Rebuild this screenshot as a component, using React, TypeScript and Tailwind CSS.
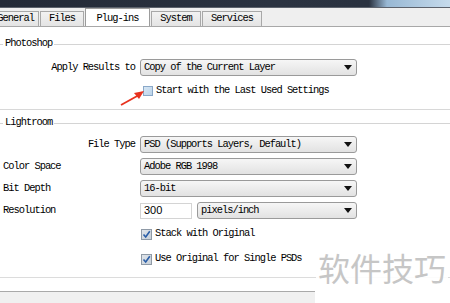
import React from 'react';

const mono = "font-['Liberation_Mono',monospace] text-[10.4px] tracking-[-1px] text-black";

function Arrow() {
  return (
    <svg width="8" height="5" viewBox="0 0 8 5" className="shrink-0">
      <polygon points="0,0 8,0 4,5" fill="#111" />
    </svg>
  );
}

function Select({ value, width = 'w-[217px]' }: { value: string; width?: string }) {
  return (
    <div
      className={`${width} h-[17px] flex items-center justify-between pl-[3px] pr-[4px] border border-[#9a9a9a] rounded-[3px] bg-[linear-gradient(180deg,#f6f6f6_0%,#ececec_50%,#e2e2e2_100%)]`}
    >
      <span className="whitespace-pre">{value}</span>
      <Arrow />
    </div>
  );
}

function Check({ checked }: { checked: boolean }) {
  if (!checked) {
    return (
      <div className="w-[10px] h-[10px] border border-[#8aa8c8] bg-[linear-gradient(135deg,#d6e6f4_0%,#bcd4ea_100%)]" />
    );
  }
  return (
    <div className="w-[11px] h-[11px] border border-[#8f9aa6] bg-[linear-gradient(135deg,#dfe4ea_0%,#c8d0d8_100%)] flex items-center justify-center">
      <svg width="9" height="9" viewBox="0 0 9 9">
        <path d="M1.5 4.5 L3.7 7 L7.8 1.2" stroke="#2a5ea8" strokeWidth="1.6" fill="none" />
      </svg>
    </div>
  );
}

function GroupHeader({ label }: { label: string }) {
  return (
    <div className="h-[12px] flex items-center">
      <div className="w-[3px] h-px bg-[#d4d4d4]" />
      <span className="px-[2px] whitespace-pre">{label}</span>
      <div className="flex-1 h-px bg-[#d4d4d4]" />
    </div>
  );
}

function Tab({ label, active, w }: { label: string; active?: boolean; w: string }) {
  if (active) {
    return (
      <div className={`${w} h-[18px] bg-white border border-b-0 border-[#9c9c9c] flex items-start justify-center pt-[2px]`}>
        {label}
      </div>
    );
  }
  return (
    <div className={`${w} h-[15px] bg-[linear-gradient(180deg,#f2f2f2,#e4e4e4)] border border-b-0 border-[#a8a8a8] flex items-center justify-center`}>
      {label}
    </div>
  );
}

export default function App() {
  return (
    <div className={`relative w-[450px] h-[303px] overflow-hidden bg-white ${mono}`}>
      {/* title bar */}
      <div className="h-[8px] bg-[linear-gradient(90deg,#232a37_0%,#2b3341_60%,#2a3240_82%,#98b8d4_86%,#c6dbec_100%)] border-b border-[#5c626c]" />

      {/* tabs */}
      <div className="h-[19px] flex items-end bg-[#efefef] border-b border-[#a8a8a8]">
        <div className="flex items-end -ml-[6px] gap-[1px]">
          <Tab label="General" w="w-[45px] justify-end pr-[4px]" />
          <Tab label="Files" w="w-[44px]" />
          <Tab label="Plug-ins" active w="w-[65px]" />
          <Tab label="System" w="w-[50px]" />
          <Tab label="Services" w="w-[60px]" />
        </div>
      </div>

      {/* Photoshop group */}
      <div className="mt-[11px]">
        <GroupHeader label="Photoshop" />
      </div>
      <div className="mt-[9px] flex items-center">
        <div className="w-[135px] text-right whitespace-pre">Apply Results to</div>
        <div className="ml-[5px]">
          <Select value="Copy of the Current Layer" />
        </div>
      </div>
      <div className="mt-[9px] h-[12px] flex items-center pl-[143px] gap-[3px]">
        <Check checked={false} />
        <span className="whitespace-pre">Start with the Last Used Settings</span>
      </div>
      <div className="mt-[12px] h-px bg-[#d8d8d8]" />

      {/* Lightroom group */}
      <div className="mt-[7px]">
        <GroupHeader label="Lightroom" />
      </div>
      <div className="mt-[7px] flex items-center">
        <div className="w-[135px] text-right whitespace-pre">File Type</div>
        <div className="ml-[5px]">
          <Select value="PSD (Supports Layers, Default)" />
        </div>
      </div>
      <div className="mt-[5px] flex items-center">
        <div className="w-[135px] pl-[3px] whitespace-pre">Color Space</div>
        <div className="ml-[5px]">
          <Select value="Adobe RGB 1998" />
        </div>
      </div>
      <div className="mt-[5px] flex items-center">
        <div className="w-[135px] pl-[3px] whitespace-pre">Bit Depth</div>
        <div className="ml-[5px]">
          <Select value="16-bit" />
        </div>
      </div>
      <div className="mt-[5px] flex items-center">
        <div className="w-[135px] pl-[3px] whitespace-pre">Resolution</div>
        <div className="ml-[5px] flex items-center gap-[5px]">
          <div className="w-[52px] h-[16px] border border-[#d4d4d4] bg-white flex items-center pl-[3px] font-['Liberation_Sans',sans-serif] text-[11px] tracking-normal">
            300
          </div>
          <Select value="pixels/inch" width="w-[160px]" />
        </div>
      </div>
      <div className="mt-[9px] h-[12px] flex items-center pl-[141px] gap-[3px]">
        <Check checked />
        <span className="whitespace-pre">Stack with Original</span>
      </div>
      <div className="mt-[13px] h-[12px] flex items-center pl-[141px] gap-[3px]">
        <Check checked />
        <span className="whitespace-pre">Use Original for Single PSDs</span>
      </div>
      <div className="mt-[12px] h-px bg-[#dcdcdc]" />
      <div className="mt-[13px] w-[315px] h-[14px] border-t border-[#a9a9a9] bg-[#f0f0f0]" />

      {/* annotation arrow */}
      <svg className="absolute left-[119px] top-[88px]" width="28" height="20" viewBox="0 0 28 20">
        <line x1="2" y1="17" x2="20" y2="7" stroke="#e8321e" strokeWidth="1.8" />
        <polygon points="25,3 15,5 20,11" fill="#e8321e" />
      </svg>

      {/* watermark */}
      <div className="absolute left-[316px] top-[247px] px-[2px] whitespace-nowrap bg-white/90 font-['Noto_Sans_CJK_SC',sans-serif] text-[32px] leading-[40px] tracking-[0px] text-[#c6c6c6]">
        软件技巧
      </div>
    </div>
  );
}
